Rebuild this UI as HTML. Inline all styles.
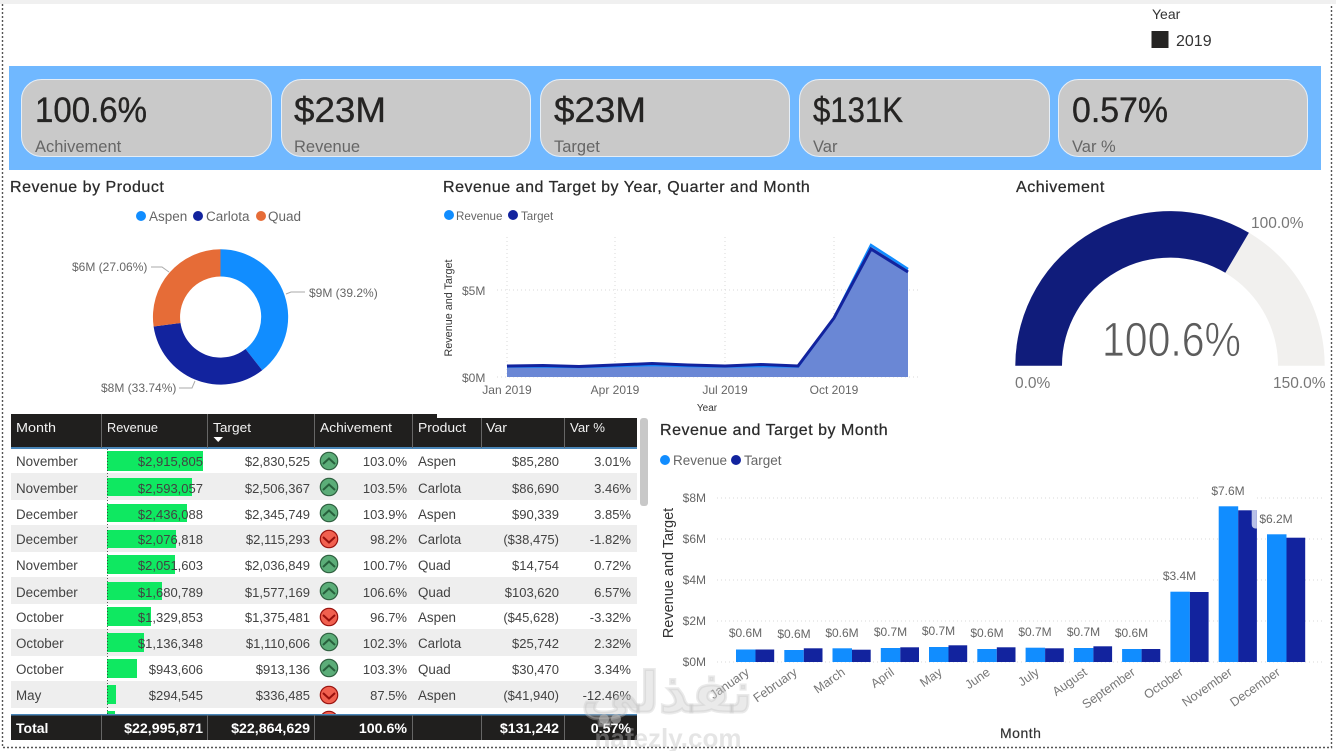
<!DOCTYPE html>
<html><head><meta charset="utf-8"><title>Dashboard</title>
<style>
html,body{margin:0;padding:0;background:#fff;width:1336px;height:751px;overflow:hidden}
svg{display:block;font-family:"Liberation Sans",sans-serif}
.t{font-size:16px;fill:#2b2b2b;letter-spacing:.52px;stroke:#2b2b2b;stroke-width:.25px}
.kv{font-size:35px;fill:#252423;stroke:#252423;stroke-width:.35px}
.kl{font-size:16.5px;fill:#666}
.c{font-size:13.4px;fill:#424242}
.n{font-size:13px;fill:#424242;text-anchor:end}
.h{font-size:13px;fill:#f2f2f2}
.b{font-size:14.2px;fill:#fff;font-weight:700;text-anchor:end}
.l{font-size:12px;fill:#666}
.g{font-size:12px;fill:#666;text-anchor:middle}
.m{font-size:12.5px;fill:#777;text-anchor:end}
</style></head><body>
<svg width="1336" height="751" viewBox="0 0 1336 751" xmlns="http://www.w3.org/2000/svg">
<defs>
<g id="u"><circle r="8.7" fill="#5bad78" stroke="#2f6040" stroke-width="1.2"/><path d="M-6-0 0-5.5 6-0" transform="translate(0 3)" fill="none" stroke="#27603c" stroke-width="2"/></g>
<g id="d"><circle r="8.7" fill="#f1604f" stroke="#99130f" stroke-width="1.2"/><path d="M-6 0 0 5.5 6 0" transform="translate(0 -2)" fill="none" stroke="#98100c" stroke-width="2"/></g>
<clipPath id="rowclip"><rect x="10" y="449" width="628" height="265"/></clipPath>
</defs>
<rect x="0" y="0" width="1336" height="4" fill="#f0f0f0"/>
<g fill="none" stroke="#555" stroke-width="1.4" stroke-dasharray="2 2">
<path d="M2.5 4V747.5H1331.5V4"/>
</g>

<!-- slicer -->
<text x="1152" y="19" font-size="14" fill="#333">Year</text>
<rect x="1151.5" y="31" width="17" height="17" fill="#252423"/>
<text x="1176" y="46" font-size="16" fill="#333">2019</text>

<!-- KPI band -->
<rect x="9" y="66" width="1312" height="104" fill="#70b8ff"/>
<g fill="#c9c9c9" stroke="#e6eef6" stroke-width="1">
<rect x="21.5" y="79.5" width="250" height="77" rx="20"/>
<rect x="281.5" y="79.5" width="249" height="77" rx="20"/>
<rect x="540.5" y="79.5" width="249" height="77" rx="20"/>
<rect x="799.5" y="79.5" width="250" height="77" rx="20"/>
<rect x="1058.500" y="79.5" width="249" height="77" rx="20"/>
</g>
<text class="kv" x="35" y="122" textLength="112" lengthAdjust="spacingAndGlyphs">100.6%</text><text class="kl" x="35" y="152">Achivement</text>
<text class="kv" x="294" y="122" textLength="92" lengthAdjust="spacingAndGlyphs">$23M</text><text class="kl" x="294" y="152">Revenue</text>
<text class="kv" x="554" y="122" textLength="92" lengthAdjust="spacingAndGlyphs">$23M</text><text class="kl" x="554" y="152">Target</text>
<text class="kv" x="813" y="122" textLength="90" lengthAdjust="spacingAndGlyphs">$131K</text><text class="kl" x="813" y="152">Var</text>
<text class="kv" x="1072" y="122" textLength="96" lengthAdjust="spacingAndGlyphs">0.57%</text><text class="kl" x="1072" y="152">Var %</text>

<!-- Donut -->
<text class="t" x="10" y="192">Revenue by Product</text>
<circle cx="141" cy="216" r="5" fill="#118dff"/><text x="149" y="221" font-size="13.5" fill="#666">Aspen</text>
<circle cx="198" cy="216" r="5" fill="#12239e"/><text x="206" y="221" font-size="13.5" fill="#666">Carlota</text>
<circle cx="261" cy="216" r="5" fill="#e66c37"/><text x="268" y="221" font-size="13.5" fill="#666">Quad</text>
<path d="M220.5 249.3A67.7 67.7 0 0 1 262.2 370.3L245.5 349A40.5 40.5 0 0 0 220.5 276.5Z" fill="#118dff"/>
<path d="M262.2 370.3A67.7 67.7 0 0 1 153.6 326.5L180.5 323A40.5 40.5 0 0 0 245.5 349Z" fill="#12239e"/>
<path d="M153.6 326.5A67.7 67.7 0 0 1 220.5 249.3V276.5A40.5 40.5 0 0 0 180.5 323Z" fill="#e66c37"/>
<g fill="none" stroke="#aaa" stroke-width="1">
<path d="M286 294 291 292H305"/><path d="M151 267H162L169 272"/><path d="M179 388H192L195 381"/>
</g>
<text x="309" y="297" font-size="12" fill="#666">$9M (39.2%)</text>
<text x="72" y="271" font-size="12" fill="#666">$6M (27.06%)</text>
<text x="101" y="392" font-size="12" fill="#666">$8M (33.74%)</text>

<!-- Area chart -->
<text class="t" x="443" y="192">Revenue and Target by Year, Quarter and Month</text>
<circle cx="449" cy="215" r="5" fill="#118dff"/><text x="456" y="220" font-size="11.6" fill="#666">Revenue</text>
<circle cx="513" cy="215" r="5" fill="#12239e"/><text x="521" y="220" font-size="11.6" fill="#666">Target</text>
<g stroke="#d9d9d9" stroke-width="1" stroke-dasharray="1 3" fill="none">
<path d="M507 237V377M615 237V377M725 237V377M834 237V377M497 290H920M497 377H918"/>
</g>
<path d="M507 366 543 365.500 579 366.500 615 365 652 363.500 688 365 725 366 761 364.500 798 366 834 317 871 245 908 269V377H507Z" fill="#6a87d5"/>
<path d="M507 366.500 543 366.500 579 367 615 366 652 365 688 366 725 366.500 761 366 798 366.500 834 318 871 245 908 269" fill="none" stroke="#118dff" stroke-width="2.500"/>
<path d="M507 366 543 365.500 579 366.500 615 365 652 363.500 688 365 725 366 761 364.500 798 366 834 318 871 249 908 272" fill="none" stroke="#12239e" stroke-width="3"/>
<text x="462" y="295" font-size="12" fill="#666">$5M</text>
<text x="462" y="382" font-size="12" fill="#666">$0M</text>
<text class="g" x="507" y="394">Jan 2019</text>
<text class="g" x="615" y="394">Apr 2019</text>
<text class="g" x="725" y="394">Jul 2019</text>
<text class="g" x="834" y="394">Oct 2019</text>
<text x="707" y="411" font-size="10" fill="#333" text-anchor="middle">Year</text>
<text transform="translate(452 308) rotate(-90)" font-size="10.8" fill="#333" text-anchor="middle">Revenue and Target</text>

<!-- Gauge -->
<text class="t" x="1016" y="192">Achivement</text>
<path d="M1015.300 365.700A154.700 154.700 0 0 1 1324.700 365.700H1278A108 108 0 0 0 1062 365.700Z" fill="#f1f0ee"/>
<path d="M1015.300 365.700A154.700 154.700 0 0 1 1248.900 232.800L1225.300 272.800A108 108 0 0 0 1062 365.700Z" fill="#101c7b"/>
<text x="1102" y="356" font-size="48" fill="#5c5c5c" stroke="#fff" stroke-width=".8" textLength="139" lengthAdjust="spacingAndGlyphs">100.6%</text>
<text x="1251" y="228" font-size="15.5" fill="#777">100.0%</text>
<text x="1015" y="388" font-size="15.5" fill="#777">0.0%</text>
<text x="1273" y="388" font-size="15.5" fill="#777">150.0%</text>

<!-- Table -->
<rect x="11" y="414" width="426" height="34" fill="#201f1e"/>
<rect x="437" y="418" width="200" height="30" fill="#201f1e"/>
<rect x="11" y="447" width="626" height="2" fill="#4a86b8"/>
<g fill="#eeeeee">
<rect x="11" y="473" width="626" height="27"/>
<rect x="11" y="525" width="626" height="27"/>
<rect x="11" y="577" width="626" height="27"/>
<rect x="11" y="629" width="626" height="27"/>
<rect x="11" y="681" width="626" height="27"/>
</g>
<g fill="#0fe861">
<rect x="107" y="451" width="96" height="20"/>
<rect x="107" y="478" width="85" height="18"/>
<rect x="107" y="504" width="80" height="18"/>
<rect x="107" y="530" width="69" height="18"/>
<rect x="107" y="555" width="68" height="19"/>
<rect x="107" y="582" width="55" height="18"/>
<rect x="107" y="607" width="44" height="19"/>
<rect x="107" y="633" width="37" height="19"/>
<rect x="107" y="659" width="30" height="19"/>
<rect x="107" y="685" width="9" height="19"/>
<rect x="107" y="711" width="8" height="3"/>
</g>
<path d="M107.500 449V714" stroke="#333" stroke-width=".8" stroke-dasharray="1 2" fill="none"/>
<g stroke="#666" stroke-width="1">
<path d="M101.500 414V448M207.500 414V448M314.500 414V448M412.500 414V448M481.500 418V448M564.500 418V448"/>
</g>
<text class="h" x="16" y="432" textLength="40" lengthAdjust="spacingAndGlyphs">Month</text>
<text class="h" x="107" y="432" textLength="51" lengthAdjust="spacingAndGlyphs">Revenue</text>
<text class="h" x="213" y="432" textLength="38" lengthAdjust="spacingAndGlyphs">Target</text>
<path d="M213.500 437H223L218.200 442Z" fill="#fff"/>
<text class="h" x="320" y="432" textLength="72" lengthAdjust="spacingAndGlyphs">Achivement</text>
<text class="h" x="418" y="432" textLength="48" lengthAdjust="spacingAndGlyphs">Product</text>
<text class="h" x="486" y="432" textLength="21" lengthAdjust="spacingAndGlyphs">Var</text>
<text class="h" x="570" y="432" textLength="35" lengthAdjust="spacingAndGlyphs">Var %</text>

<text class="c" x="16" y="466">November</text><text class="n" x="203" y="466">$2,915,805</text><text class="n" x="310" y="466">$2,830,525</text><use href="#u" x="329" y="461"/><text class="n" x="407" y="466">103.0%</text><text class="c" x="418" y="466">Aspen</text><text class="n" x="559" y="466">$85,280</text><text class="n" x="631" y="466">3.01%</text>
<text class="c" x="16" y="493">November</text><text class="n" x="203" y="493">$2,593,057</text><text class="n" x="310" y="493">$2,506,367</text><use href="#u" x="329" y="487"/><text class="n" x="407" y="493">103.5%</text><text class="c" x="418" y="493">Carlota</text><text class="n" x="559" y="493">$86,690</text><text class="n" x="631" y="493">3.46%</text>
<text class="c" x="16" y="519">December</text><text class="n" x="203" y="519">$2,436,088</text><text class="n" x="310" y="519">$2,345,749</text><use href="#u" x="329" y="513"/><text class="n" x="407" y="519">103.9%</text><text class="c" x="418" y="519">Aspen</text><text class="n" x="559" y="519">$90,339</text><text class="n" x="631" y="519">3.85%</text>
<text class="c" x="16" y="544">December</text><text class="n" x="203" y="544">$2,076,818</text><text class="n" x="310" y="544">$2,115,293</text><use href="#d" x="329" y="539"/><text class="n" x="407" y="544">98.2%</text><text class="c" x="418" y="544">Carlota</text><text class="n" x="559" y="544">($38,475)</text><text class="n" x="631" y="544">-1.82%</text>
<text class="c" x="16" y="570">November</text><text class="n" x="203" y="570">$2,051,603</text><text class="n" x="310" y="570">$2,036,849</text><use href="#u" x="329" y="564"/><text class="n" x="407" y="570">100.7%</text><text class="c" x="418" y="570">Quad</text><text class="n" x="559" y="570">$14,754</text><text class="n" x="631" y="570">0.72%</text>
<text class="c" x="16" y="597">December</text><text class="n" x="203" y="597">$1,680,789</text><text class="n" x="310" y="597">$1,577,169</text><use href="#u" x="329" y="591"/><text class="n" x="407" y="597">106.6%</text><text class="c" x="418" y="597">Quad</text><text class="n" x="559" y="597">$103,620</text><text class="n" x="631" y="597">6.57%</text>
<text class="c" x="16" y="622">October</text><text class="n" x="203" y="622">$1,329,853</text><text class="n" x="310" y="622">$1,375,481</text><use href="#d" x="329" y="617"/><text class="n" x="407" y="622">96.7%</text><text class="c" x="418" y="622">Aspen</text><text class="n" x="559" y="622">($45,628)</text><text class="n" x="631" y="622">-3.32%</text>
<text class="c" x="16" y="648">October</text><text class="n" x="203" y="648">$1,136,348</text><text class="n" x="310" y="648">$1,110,606</text><use href="#u" x="329" y="642"/><text class="n" x="407" y="648">102.3%</text><text class="c" x="418" y="648">Carlota</text><text class="n" x="559" y="648">$25,742</text><text class="n" x="631" y="648">2.32%</text>
<text class="c" x="16" y="674">October</text><text class="n" x="203" y="674">$943,606</text><text class="n" x="310" y="674">$913,136</text><use href="#u" x="329" y="668"/><text class="n" x="407" y="674">103.3%</text><text class="c" x="418" y="674">Quad</text><text class="n" x="559" y="674">$30,470</text><text class="n" x="631" y="674">3.34%</text>
<text class="c" x="16" y="700">May</text><text class="n" x="203" y="700">$294,545</text><text class="n" x="310" y="700">$336,485</text><use href="#d" x="329" y="695"/><text class="n" x="407" y="700">87.5%</text><text class="c" x="418" y="700">Aspen</text><text class="n" x="559" y="700">($41,940)</text><text class="n" x="631" y="700">-12.46%</text>
<g clip-path="url(#rowclip)"><use href="#d" x="329" y="720"/></g>

<rect x="11" y="714" width="626" height="26" fill="#201f1e"/>
<rect x="11" y="714" width="626" height="1.500" fill="#4a86b8"/>
<path d="M101.500 715V740M207.500 715V740M314.500 715V740M412.500 715V740M481.500 715V740M564.500 715V740" stroke="#666" stroke-width="1"/>
<text x="16" y="733" font-size="14" font-weight="700" fill="#fff">Total</text>
<text class="b" x="203" y="733">$22,995,871</text>
<text class="b" x="310" y="733">$22,864,629</text>
<text class="b" x="407" y="733">100.6%</text>
<text class="b" x="559" y="733">$131,242</text>
<text class="b" x="631" y="733">0.57%</text>
<rect x="640" y="418" width="8" height="88" rx="3" fill="#c8c8c8"/>

<!-- Bar chart -->
<text class="t" x="660" y="435">Revenue and Target by Month</text>
<circle cx="665" cy="460" r="5" fill="#118dff"/><text x="673" y="465" font-size="13.500" fill="#666">Revenue</text>
<circle cx="736" cy="460" r="5" fill="#12239e"/><text x="744" y="465" font-size="13.500" fill="#666">Target</text>
<g stroke="#d9d9d9" stroke-width="1" stroke-dasharray="1 3" fill="none">
<path d="M717 498H1323M717 539H1323M717 580H1323M717 621H1323M717 662H1323"/>
</g>
<g font-size="12" fill="#666" text-anchor="end">
<text x="706" y="502">$8M</text><text x="706" y="543">$6M</text><text x="706" y="584">$4M</text><text x="706" y="625">$2M</text><text x="706" y="666">$0M</text>
</g>
<g fill="#fff">
<rect x="1160" y="566" width="50" height="18"/>
<rect x="1200" y="481" width="56" height="18"/>
<rect x="1256" y="510" width="42" height="18"/>
</g>
<g fill="#118dff">
<rect x="736" y="649.500" width="19.500" height="12.500"/>
<rect x="784.300" y="650" width="19.500" height="12"/>
<rect x="832.500" y="648.300" width="19.500" height="13.700"/>
<rect x="880.800" y="648" width="19.500" height="14"/>
<rect x="929" y="647" width="19.500" height="15"/>
<rect x="977.300" y="649" width="19.500" height="13"/>
<rect x="1025.600" y="647.700" width="19.500" height="14.300"/>
<rect x="1073.900" y="648" width="19.500" height="14"/>
<rect x="1122.100" y="649" width="19.500" height="13"/>
<rect x="1170.400" y="591.700" width="19.500" height="70.300"/>
<rect x="1218.700" y="506.300" width="19.500" height="155.700"/>
<rect x="1267" y="534.300" width="19.500" height="127.700"/>
</g>
<g fill="#12239e">
<rect x="755.500" y="649.500" width="18.700" height="12.500"/>
<rect x="803.800" y="648.300" width="18.700" height="13.700"/>
<rect x="852" y="649.700" width="18.700" height="12.300"/>
<rect x="900.300" y="647.300" width="18.700" height="14.700"/>
<rect x="948.500" y="645.300" width="18.700" height="16.700"/>
<rect x="996.800" y="647.300" width="18.700" height="14.700"/>
<rect x="1045.100" y="648.300" width="18.700" height="13.700"/>
<rect x="1093.400" y="646.300" width="18.700" height="15.700"/>
<rect x="1141.600" y="649" width="18.700" height="13"/>
<rect x="1189.900" y="592" width="18.700" height="70"/>
<rect x="1238.200" y="510.300" width="18.700" height="151.700"/>
<rect x="1286.500" y="537.700" width="18.700" height="124.300"/>
</g>
<path d="M1251.700 510H1256.900V528.500H1255Q1251.700 528 1251.700 524Z" fill="#b8c0e8"/>
<g font-size="12" fill="#666" text-anchor="middle">
<text x="745.500" y="637">$0.6M</text><text x="794" y="638">$0.6M</text><text x="842" y="637">$0.6M</text><text x="890.500" y="636">$0.7M</text><text x="938.500" y="635">$0.7M</text><text x="987" y="637">$0.6M</text><text x="1035" y="636">$0.7M</text><text x="1083.500" y="636">$0.7M</text><text x="1131.500" y="637">$0.6M</text><text x="1179.500" y="580">$3.4M</text><text x="1228" y="495">$7.6M</text><text x="1276" y="523">$6.2M</text>
</g>
<text class="m" transform="translate(750 674) rotate(-35)">January</text>
<text class="m" transform="translate(798 674) rotate(-35)">February</text>
<text class="m" transform="translate(846 674) rotate(-35)">March</text>
<text class="m" transform="translate(895 674) rotate(-35)">April</text>
<text class="m" transform="translate(943 674) rotate(-35)">May</text>
<text class="m" transform="translate(991 674) rotate(-35)">June</text>
<text class="m" transform="translate(1040 674) rotate(-35)">July</text>
<text class="m" transform="translate(1088 674) rotate(-35)">August</text>
<text class="m" transform="translate(1136 674) rotate(-35)">September</text>
<text class="m" transform="translate(1184 674) rotate(-35)">October</text>
<text class="m" transform="translate(1233 674) rotate(-35)">November</text>
<text class="m" transform="translate(1281 674) rotate(-35)">December</text>
<text x="1000" y="738" font-size="14" fill="#333" letter-spacing=".5" stroke="#333" stroke-width=".2">Month</text>
<text transform="translate(673 573) rotate(-90)" font-size="14.500" fill="#333" text-anchor="middle">Revenue and Target</text>

<!-- Watermark -->
<text x="667" y="712" font-size="56" font-weight="700" fill="#c4c4c4" fill-opacity=".36" stroke="#c4c4c4" stroke-opacity=".36" stroke-width="3" text-anchor="middle" style="font-family:'DejaVu Sans',sans-serif">نفذلي</text>
<circle cx="604" cy="719" r="5" fill="#bdbdbd" fill-opacity=".6"/><circle cx="616" cy="719" r="5" fill="#bdbdbd" fill-opacity=".6"/>
<text x="668" y="747" font-size="26" font-weight="700" fill="#bdbdbd" fill-opacity=".4" text-anchor="middle">nafezly.com</text>
</svg>
</body></html>
